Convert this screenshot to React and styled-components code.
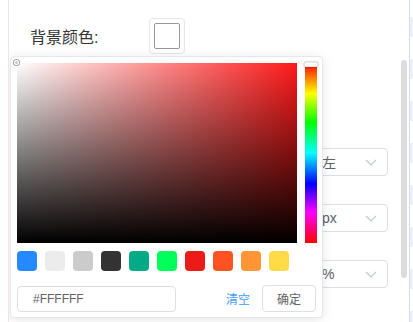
import React from "react";
import styled, { createGlobalStyle } from "styled-components";

const GlobalStyle = createGlobalStyle`
  html, body { margin: 0; padding: 0; background: #fff; }
  body { font-family: "Liberation Sans", "Noto Sans CJK SC", sans-serif; }
  * { box-sizing: border-box; }
`;

const Page = styled.div`
  display: flex;
  width: 413px;
  height: 322px;
  overflow: hidden;
`;

const Main = styled.div`
  position: relative;
  flex: 1;
  margin-left: 8px;
  border-left: 1px solid #f3e4e4;
  overflow: hidden;
`;

const SidePanel = styled.div`
  width: 4px;
  border-left: 1px solid #d3dcf3;
  background: repeating-linear-gradient(
    to bottom,
    #ffffff 0px,
    #ffffff 17px,
    #eef0fa 17px,
    #eef0fa 37px,
    #ffffff 37px,
    #ffffff 42px
  );
`;

const Form = styled.div`
  display: flex;
  flex-direction: column;
  gap: 28px;
  padding: 18px 21px 0 21px;
`;

const Row = styled.div`
  display: flex;
  align-items: center;
  height: ${(p) => p.$h}px;
`;

const Label = styled.div`
  width: 119px;
  font-size: 16px;
  color: #333;
  white-space: nowrap;
`;

const SwatchTrigger = styled.div`
  width: 36px;
  height: 36px;
  border: 1px solid #e6e6e6;
  border-radius: 4px;
  padding: 4px;
`;

const SwatchInner = styled.div`
  width: 26px;
  height: 26px;
  border: 1px solid #999;
  border-radius: 2px;
  background: #fff;
`;

const Select = styled.div`
  margin-left: auto;
  width: 80px;
  height: 28px;
  border: 1px solid #dcdfe6;
  border-radius: 4px;
  display: flex;
  align-items: center;
  justify-content: space-between;
  padding: 0 10px 0 13px;
  font-size: 14px;
  color: #606266;
`;

const Scrollbar = styled.div`
  position: absolute;
  right: 2px;
  top: 60px;
  width: 6px;
  height: 218px;
  border-radius: 3px;
  background: #dcdcdc;
`;

const Popup = styled.div`
  position: absolute;
  left: 1px;
  top: 56px;
  width: 313px;
  background: #fff;
  border: 1px solid #e4e7ed;
  border-radius: 4px;
  box-shadow: 0 2px 12px 0 rgba(0, 0, 0, 0.1);
  padding: 6px 5px 5px 6px;
  display: flex;
  flex-direction: column;
`;

const PanelRow = styled.div`
  display: flex;
  gap: 8px;
  height: 180px;
`;

const SatPanel = styled.div`
  position: relative;
  width: 280px;
  height: 180px;
  background: linear-gradient(to top, #000, rgba(0, 0, 0, 0)),
    linear-gradient(to right, #fff, rgba(255, 255, 255, 0)), #ff1a1a;
`;

const SatCursor = styled.div`
  position: absolute;
  left: -3px;
  top: -3px;
  width: 5px;
  height: 5px;
  border-radius: 50%;
  border: 1px solid #fff;
  box-shadow: 0 0 0 1px #a0a0a0, inset 0 0 1px 1px rgba(0, 0, 0, 0.3);
`;

const HueBar = styled.div`
  position: relative;
  width: 12px;
  height: 180px;
  background: linear-gradient(
    to bottom,
    #f00 0%,
    #ff0 17%,
    #0f0 33%,
    #0ff 50%,
    #00f 67%,
    #f0f 83%,
    #f00 100%
  );
`;

const HueThumb = styled.div`
  position: absolute;
  left: -1px;
  top: -1px;
  width: 14px;
  height: 5px;
  border-radius: 2px;
  background: #fff;
  border: 1px solid #e8e8e8;
  box-shadow: 0 0 2px rgba(0, 0, 0, 0.45);
`;

const Swatches = styled.div`
  display: flex;
  gap: 8px;
  margin-top: 8px;
`;

const Swatch = styled.div`
  width: 20px;
  height: 20px;
  border-radius: 4px;
  background: ${(p) => p.$c};
`;

const Footer = styled.div`
  display: flex;
  align-items: center;
  margin-top: 14px;
  height: 27px;
`;

const HexInput = styled.div`
  width: 159px;
  height: 26px;
  border: 1px solid #dcdfe6;
  border-radius: 4px;
  padding-left: 15px;
  display: flex;
  align-items: center;
  font-size: 12px;
  color: #606266;
`;

const ClearLink = styled.span`
  margin-left: auto;
  font-size: 12px;
  color: #409eff;
`;

const ConfirmButton = styled.div`
  margin-left: 12px;
  margin-right: 1px;
  width: 54px;
  height: 27px;
  border: 1px solid #dcdfe6;
  border-radius: 4px;
  display: flex;
  align-items: center;
  justify-content: center;
  font-size: 12px;
  color: #606266;
`;

const Chevron = () => (
  <svg width="12" height="7" viewBox="0 0 12 7">
    <polyline
      points="1,1 6,6 11,1"
      fill="none"
      stroke="#c0c4cc"
      strokeWidth="1.2"
    />
  </svg>
);

const colors = [
  "#2589ff",
  "#ececec",
  "#cbcbcb",
  "#333333",
  "#00ab86",
  "#00ff5a",
  "#ec1b17",
  "#ff5223",
  "#ff9534",
  "#ffdc45",
];

const selects = [
  { label: "对齐方式:", value: "左" },
  { label: "圆角:", value: "px" },
  { label: "透明度:", value: "%" },
];

export default function App() {
  return (
    <>
      <GlobalStyle />
      <Page>
        <Main>
          <Form>
            <Row $h={36}>
              <Label>背景颜色:</Label>
              <SwatchTrigger>
                <SwatchInner />
              </SwatchTrigger>
            </Row>
            <Row $h={38}>
              <Label>背景图片:</Label>
            </Row>
            {selects.map((s) => (
              <Row $h={28} key={s.label}>
                <Label>{s.label}</Label>
                <Select>
                  <span>{s.value}</span>
                  <Chevron />
                </Select>
              </Row>
            ))}
          </Form>
          <Scrollbar />
          <Popup>
            <PanelRow>
              <SatPanel>
                <SatCursor />
              </SatPanel>
              <HueBar>
                <HueThumb />
              </HueBar>
            </PanelRow>
            <Swatches>
              {colors.map((c) => (
                <Swatch key={c} $c={c} />
              ))}
            </Swatches>
            <Footer>
              <HexInput>#FFFFFF</HexInput>
              <ClearLink>清空</ClearLink>
              <ConfirmButton>确定</ConfirmButton>
            </Footer>
          </Popup>
        </Main>
        <SidePanel />
      </Page>
    </>
  );
}
